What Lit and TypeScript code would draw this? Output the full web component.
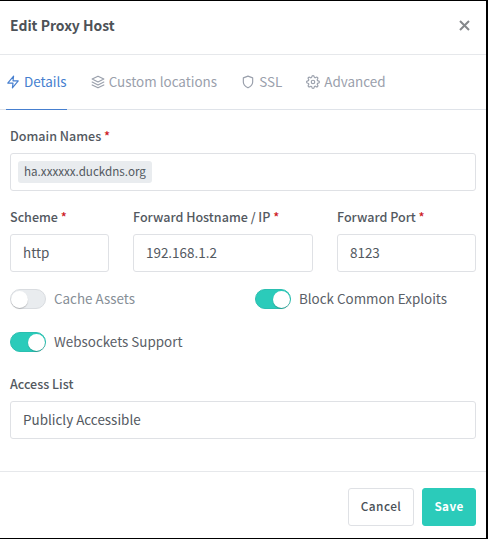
import { LitElement, html, css, svg } from "lit";
import { customElement, property } from "lit/decorators.js";
import { classMap } from "lit/directives/class-map.js";

const icons = {
  zap: svg`<polygon points="13 2 3 14 12 14 11 22 21 10 12 10 13 2"></polygon>`,
  layers: svg`<polygon points="12 2 2 7 12 12 22 7 12 2"></polygon><polyline points="2 17 12 22 22 17"></polyline><polyline points="2 12 12 17 22 12"></polyline>`,
  shield: svg`<path d="M12 22s8-4 8-10V5l-8-3-8 3v7c0 6 8 10 8 10z"></path>`,
  settings: svg`<circle cx="12" cy="12" r="3"></circle><path d="M19.4 15a1.65 1.65 0 0 0 .33 1.82l.06.06a2 2 0 0 1 0 2.83 2 2 0 0 1-2.83 0l-.06-.06a1.65 1.65 0 0 0-1.82-.33 1.65 1.65 0 0 0-1 1.51V21a2 2 0 0 1-2 2 2 2 0 0 1-2-2v-.09A1.65 1.65 0 0 0 9 19.4a1.65 1.65 0 0 0-1.82.33l-.06.06a2 2 0 0 1-2.83 0 2 2 0 0 1 0-2.83l.06-.06a1.65 1.65 0 0 0 .33-1.82 1.65 1.65 0 0 0-1.51-1H3a2 2 0 0 1-2-2 2 2 0 0 1 2-2h.09A1.65 1.65 0 0 0 4.6 9a1.65 1.65 0 0 0-.33-1.82l-.06-.06a2 2 0 0 1 0-2.83 2 2 0 0 1 2.83 0l.06.06a1.65 1.65 0 0 0 1.82.33H9a1.65 1.65 0 0 0 1-1.51V3a2 2 0 0 1 2-2 2 2 0 0 1 2 2v.09a1.65 1.65 0 0 0 1 1.51 1.65 1.65 0 0 0 1.82-.33l.06-.06a2 2 0 0 1 2.83 0 2 2 0 0 1 0 2.83l-.06.06a1.65 1.65 0 0 0-.33 1.82V9a1.65 1.65 0 0 0 1.51 1H21a2 2 0 0 1 2 2 2 2 0 0 1-2 2h-.09a1.65 1.65 0 0 0-1.51 1z"></path>`,
};

@customElement("toggle-switch")
export class ToggleSwitch extends LitElement {
  @property() label = "";
  @property({ type: Boolean }) on = false;

  static styles = css`
    :host { display: flex; align-items: center; height: 20px; color: #868e96; }
    :host([on]) { color: #5a6067; }
    .track {
      box-sizing: border-box; width: 36px; height: 20px; margin-right: 8px;
      border: 1px solid #d9dce0; border-radius: 10px; background: #e9ecef; display: flex; align-items: center;
    }
    .track.on { background: #2bcbba; border-color: #2bbfb0; justify-content: flex-end; }
    .knob { width: 17px; height: 17px; border-radius: 50%; background: #fff; box-shadow: 0 1px 1px rgba(0,0,0,.2); }
    .text { font-size: 13.42px; line-height: 20px; padding-bottom: 2px; white-space: nowrap; }
  `;

  render() {
    return html`<span class=${classMap({ track: true, on: this.on })}><span class="knob"></span></span>
      <span class="text">${this.label}</span>`;
  }
}

@customElement("app-root")
export class AppRoot extends LitElement {
  static styles = css`
    * { box-sizing: border-box; }
    :host {
      display: block; width: 490px; height: 539px; overflow: hidden; background: #fff;
      color: #53595f; font: 13.45px/20px "Noto Sans CJK JP", "Noto Sans", sans-serif;
    }
    .modal {
      width: 488px; height: 539px; border: solid #000; border-width: 1px 2px 1px 0;
      display: flex; flex-direction: column;
    }
    .header { height: 54px; padding: 0 16px 5px 10px; border-bottom: 1px solid #e6e8eb; display: flex; align-items: center; justify-content: space-between; }
    .title { font-size: 13.95px; font-weight: 700; color: #4d5257; }
    .close { width: 11px; height: 11px; }
    .tabs { height: 55px; padding-left: 6px; border-bottom: 1px solid #dfe3e9; display: flex; gap: 24px; }
    .tab { height: 55px; padding-bottom: 1px; border-bottom: 1px solid transparent; display: flex; align-items: center; gap: 4px; color: #9aa0ac; white-space: nowrap; }
    .tab.active { color: #467fcf; border-color: #467fcf; }
    .tab .name { padding-bottom: 1px; }
    .icon { width: 14px; height: 14px; fill: none; stroke: currentColor; stroke-width: 2; stroke-linecap: round; stroke-linejoin: round; }
    .body { height: 362px; padding: 16px 10px 0; border-bottom: 1px solid #e6e8eb; }
    .label { display: block; height: 20px; margin-bottom: 7px; font-size: 12.55px; font-weight: 500; white-space: nowrap; }
    .star { color: #cd201f; }
    .control { height: 38px; border: 1px solid #dfe1e5; border-radius: 3px; padding: 0 12px 2px; display: flex; align-items: center; }
    .control.tags { padding: 0 7px; }
    .chip { height: 22px; padding: 0 6px; border-radius: 3px; background: #e9ecef; font-size: 11.65px; line-height: 20px; }
    .row { display: grid; grid-template-columns: 99px 180px 139px; gap: 24px; margin: 16px 0 17px; }
    .switches { display: grid; grid-template-columns: 245px 1fr; row-gap: 23px; margin-bottom: 22px; }
    .footer { flex: 1; padding: 16px 10px 0; display: flex; justify-content: flex-end; gap: 8px; }
    .button { height: 38px; border: 1px solid #dfe1e5; border-radius: 3px; background: #fff; color: #495057; font: 500 11.9px/34px "Noto Sans CJK JP", sans-serif; letter-spacing: .4px; padding: 0 0 2px; width: 66px; }
    .button.save { width: 54px; background: #2bcbba; border-color: #2bcbba; color: #fff; font-weight: 700; font-size: 11.7px; }
  `;

  private tabs: { name: string; icon: keyof typeof icons }[] = [
    { name: "Details", icon: "zap" },
    { name: "Custom locations", icon: "layers" },
    { name: "SSL", icon: "shield" },
    { name: "Advanced", icon: "settings" },
  ];

  private field(label: string, value: string) {
    return html`<div><label class="label">${label} <span class="star">*</span></label>
      <div class="control">${value}</div></div>`;
  }

  render() {
    return html`<div class="modal">
      <div class="header">
        <span class="title">Edit Proxy Host</span>
        <svg class="close" viewBox="0 0 11 11" stroke="#85888b" stroke-width="2"><path d="M1 1l9 9M10 1l-9 9"></path></svg>
      </div>
      <div class="tabs">
        ${this.tabs.map((t, i) => html`<div class=${classMap({ tab: true, active: i === 0 })}>
          <svg class="icon" viewBox="0 0 24 24">${icons[t.icon]}</svg><span class="name">${t.name}</span>
        </div>`)}
      </div>
      <div class="body">
        <label class="label">Domain Names <span class="star">*</span></label>
        <div class="control tags"><span class="chip">ha.xxxxxx.duckdns.org</span></div>
        <div class="row">
          ${this.field("Scheme", "http")}
          ${this.field("Forward Hostname / IP", "192.168.1.2")}
          ${this.field("Forward Port", "8123")}
        </div>
        <div class="switches">
          <toggle-switch label="Cache Assets"></toggle-switch>
          <toggle-switch label="Block Common Exploits" on></toggle-switch>
          <toggle-switch label="Websockets Support" on></toggle-switch>
        </div>
        <label class="label">Access List</label>
        <div class="control">Publicly Accessible</div>
      </div>
      <div class="footer">
        <button class="button">Cancel</button>
        <button class="button save">Save</button>
      </div>
    </div>`;
  }
}
